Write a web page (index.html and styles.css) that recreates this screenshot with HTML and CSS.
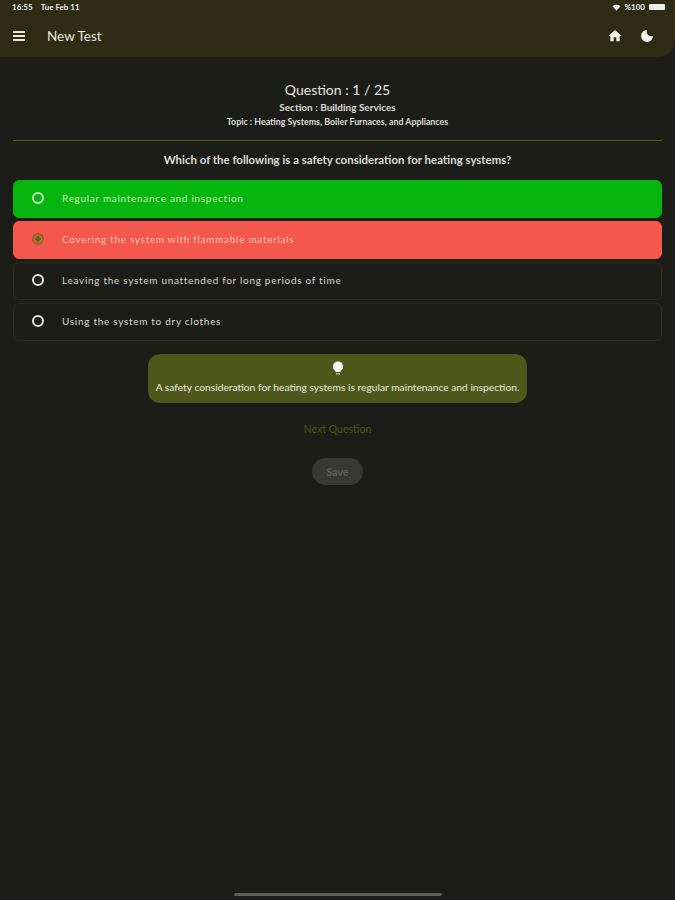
FILE: index.html
```html
<!DOCTYPE html>
<html lang="en">
<head>
    <meta charset="UTF-8">
    <meta name="viewport" content="width=device-width, initial-scale=1.0">
    <title>New Test</title>
    <link rel="stylesheet" href="styles.css">
</head>
<body>
    <header class="appbar">
        <div class="status">
            <span class="clock"><span>16:55</span><span>Tue Feb 11</span></span>
            <div class="status-right">
                <svg class="wifi" viewBox="0 0 12 10"><path d="M6 9.5 0.5 3.2C3.5 0.4 8.5 0.4 11.5 3.2Z"/></svg>
                <span>%100</span>
                <span class="battery"></span>
            </div>
        </div>
        <div class="toolbar">
            <svg class="icon menu" viewBox="0 0 12 10"><path d="M0 1h12M0 5h12M0 9h12"/></svg>
            <span class="title">New Test</span>
            <div class="actions">
                <svg class="icon" viewBox="0 0 24 24"><path d="M10 20v-6h4v6h5v-8h3L12 3 2 12h3v8z"/></svg>
                <svg class="icon" viewBox="0 0 24 24"><path d="M12 3a9 9 0 1 0 9 9 7 7 0 0 1-9-9z"/></svg>
            </div>
        </div>
    </header>

    <main class="content">
        <h1>Question : 1 / 25</h1>
        <p class="section">Section : Building Services</p>
        <p class="topic">Topic : Heating Systems, Boiler Furnaces, and Appliances</p>
        <hr>
        <h2>Which of the following is a safety consideration for heating systems?</h2>

        <ul class="options">
            <li class="correct"><span class="radio"></span>Regular maintenance and inspection</li>
            <li class="wrong"><span class="radio checked"></span>Covering the system with flammable materials</li>
            <li><span class="radio"></span>Leaving the system unattended for long periods of time</li>
            <li><span class="radio"></span>Using the system to dry clothes</li>
        </ul>

        <div class="hint">
            <svg class="bulb" viewBox="0 0 12 14"><path d="M6 0.5a5 5 0 0 0-2.6 9.3V11h5.2V9.800A5 5 0 0 0 6 0.5z"/><path class="base" d="M4 12h4v1.500H4z"/></svg>
            <p>A safety consideration for heating systems is regular maintenance and inspection.</p>
        </div>

        <a class="next">Next Question</a>
        <button class="save">Save</button>
    </main>

    <div class="home-bar"></div>
</body>
</html>
```

FILE: styles.css
```css
* { box-sizing: border-box; }
html, body { height: 100%; }
body { margin: 0; background: #1c1d19; color: #e6e6e0; font-family: Lato, "Open Sans", sans-serif; position: relative; }

.appbar { height: 57px; background: #2e2c14; border-radius: 0 0 16px 0; padding: 0 10px 0 12px; }
.status { height: 17px; padding-top: 2px; display: flex; justify-content: space-between; font-size: 8px; font-weight: 700; color: #eee; }
.clock { display: flex; gap: 8px; }
.status-right { display: flex; align-items: center; gap: 4px; height: 10px; }
.wifi { width: 9px; height: 7px; fill: #eee; }
.battery { width: 16px; height: 6px; background: #eee; border-radius: 1px; }
.toolbar { display: flex; align-items: center; height: 37px; }
.icon { width: 16px; height: 16px; fill: #f2f2ea; }
.menu { width: 12px; height: 10px; margin-left: 1px; fill: none; stroke: #e8e8e0; stroke-width: 2; }
.title { margin-left: 22px; font-size: 13.500px; color: #e8e8e0; }
.actions { margin-left: auto; display: flex; gap: 16px; padding-right: 10px; }

.content { display: flex; flex-direction: column; align-items: center; padding: 24px 13px 0; }
h1 { margin: 0; font-size: 14px; line-height: 18px; font-weight: 400; color: #e6e6e0; }
.section { margin: 2px 0 0; font-size: 10px; line-height: 12px; font-weight: 700; color: #deded8; }
.topic { margin: 3px 0 0; font-size: 8.850px; line-height: 11px; font-weight: 700; color: #deded8; }
hr { width: 100%; height: 1px; margin: 13px 0 0; border: none; background: #5a5c10; }
h2 { margin: 11px 0 0; font-size: 11.450px; line-height: 16px; font-weight: 700; color: #deded8; }

.options { list-style: none; width: 100%; margin: 12px 0 0; padding: 0; display: flex; flex-direction: column; gap: 3px; }
.options li { height: 38px; display: flex; align-items: center; padding: 0 0 2px 18px; border: 1px solid #2c2c18; border-radius: 6px; font-size: 10px; letter-spacing: 0.7px; color: #d8d8d2; }
.options .correct { background: #06b60e; border-color: #06b60e; color: #c8eebb; }
.options .wrong { background: #f4574b; border-color: #f4574b; color: #fbc0b4; }
.radio { width: 12px; height: 12px; margin-right: 18px; border: 2px solid #e8e8e2; border-radius: 50%; }
.correct .radio { border-color: #c4eeb8; }
.radio.checked { border-color: #8a6a24; background: radial-gradient(circle, #5c6a14 2.500px, transparent 3px); }

.hint { width: 379px; height: 49px; margin-top: 13px; padding-top: 7px; border-radius: 12px; background: #4e581b; display: flex; flex-direction: column; align-items: center; }
.bulb { width: 12px; height: 14px; fill: #f6f6f0; }
.bulb .base { fill: #b8b8a8; }
.hint p { margin: 6px 0 0; font-size: 10.250px; line-height: 13px; color: #e8e8e0; white-space: nowrap; }

.next { margin-top: 19px; font-size: 10.500px; line-height: 14px; color: #4f5a10; }
.save { width: 51px; height: 27px; margin-top: 22px; padding: 0; border: none; border-radius: 14px; background: #383836; color: #62625e; font: 700 10.500px Lato, sans-serif; }

.home-bar { position: absolute; left: 234px; bottom: 4px; width: 208px; height: 3px; border-radius: 2px; background: #5c5d58; }
```
